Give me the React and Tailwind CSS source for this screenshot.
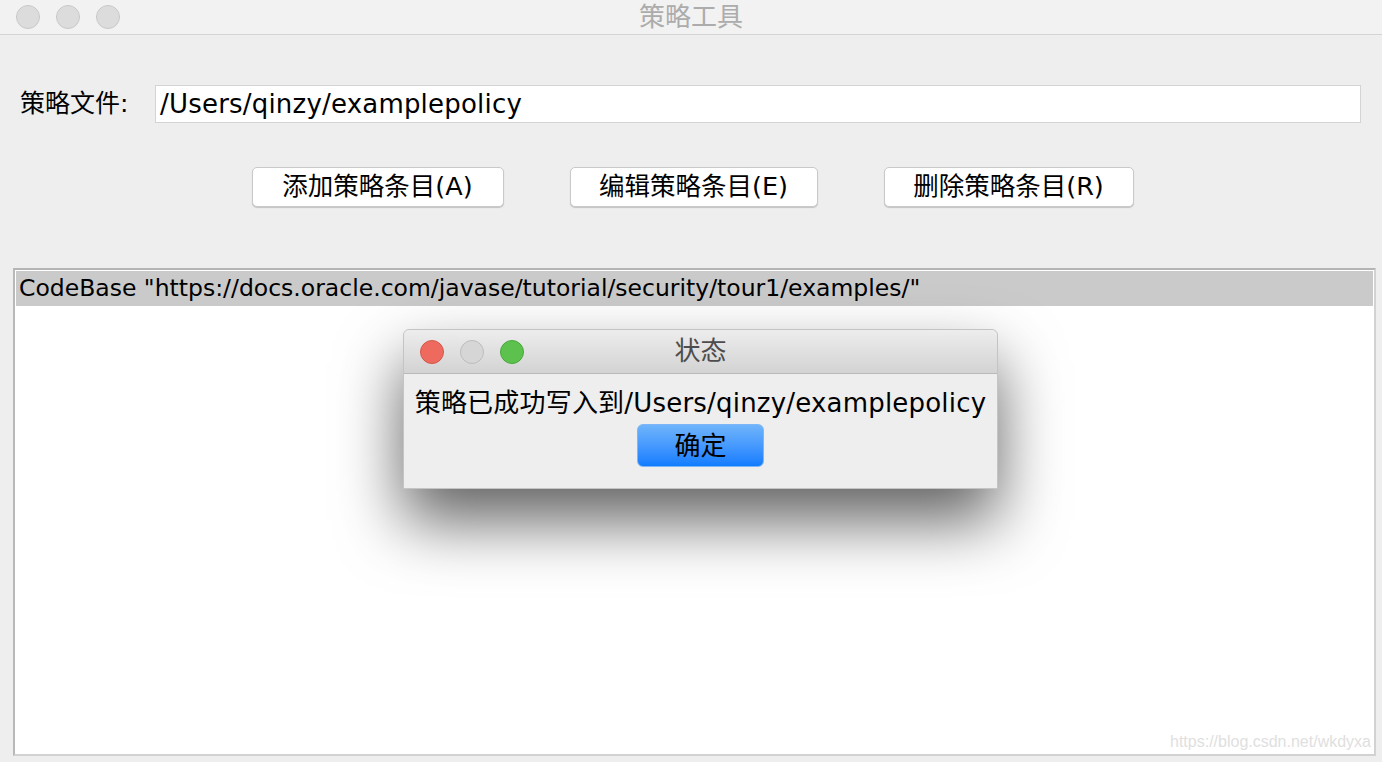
import React from 'react';

const font = { fontFamily: '"DejaVu Sans", "Noto Sans CJK SC", sans-serif' };

function Light({ color }) {
  const styles = {
    idle: 'bg-[#dcdcdc] border-[#c9c9c9]',
    grey: 'bg-[#d6d6d6] border-[#bdbdbd]',
    red: 'bg-[#ee6a5e] border-[#d5574b]',
    green: 'bg-[#5cc24d] border-[#47a83a]',
  };
  return <span className={`block w-6 h-6 rounded-full border ${styles[color]}`} />;
}

function ActionButton({ children, width }) {
  return (
    <button
      className={`${width} h-10 bg-white rounded-[5px] border border-[#c9c9c9] shadow-[0_1px_1px_rgba(0,0,0,0.18)] text-[25.5px] leading-none text-black`}
    >
      {children}
    </button>
  );
}

export default function App() {
  return (
    <div className="w-[1382px] h-[762px] bg-[#eeeeee] flex flex-col overflow-hidden" style={font}>
      {/* title bar */}
      <div className="relative h-[35px] shrink-0 bg-[#f2f2f2] border-b border-[#d4d4d4] flex items-center">
        <div className="flex items-center gap-4 pl-4">
          <Light color="idle" />
          <Light color="idle" />
          <Light color="idle" />
        </div>
        <div className="absolute inset-0 flex items-center justify-center text-[26px] text-[#acacac] pointer-events-none">
          策略工具
        </div>
      </div>

      {/* policy file row */}
      <div className="flex items-center mt-[50px] pl-5 pr-[21px]">
        <span className="text-[25px] text-black w-[135px] shrink-0">策略文件:</span>
        <div className="flex-1 h-[38px] bg-white border border-[#d4d4d4] flex items-center pl-[4px] text-[26px] tracking-[0.2px] text-black">
          /Users/qinzy/examplepolicy
        </div>
      </div>

      {/* buttons */}
      <div className="flex justify-center gap-[66px] mt-[44px] pl-[3px]">
        <ActionButton width="w-[252px]">添加策略条目(A)</ActionButton>
        <ActionButton width="w-[248px]">编辑策略条目(E)</ActionButton>
        <ActionButton width="w-[250px]">删除策略条目(R)</ActionButton>
      </div>

      {/* policy list */}
      <div className="relative mt-[61px] ml-[13px] mr-[6px] h-[488px] bg-white border-2 border-t-[#b4b4b4] border-l-[#b8b8b8] border-r-[#d2d2d2] border-b-[#d2d2d2] p-px">
        <div className="h-[35px] bg-[#cacaca] flex items-center pl-[3px] text-[23.5px] text-black whitespace-nowrap">
          CodeBase "https://docs.oracle.com/javase/tutorial/security/tour1/examples/"
        </div>

        {/* status dialog */}
        <div className="absolute left-[388px] top-[59px] w-[595px] h-[160px] bg-[#eeeeee] rounded-t-[6px] border border-[#c4c4c4] shadow-[0_32px_64px_rgba(0,0,0,0.62)] flex flex-col">
          <div className="relative h-[44px] shrink-0 rounded-t-[6px] bg-gradient-to-b from-[#ededed] to-[#d3d3d3] border-b border-[#b9b9b9] flex items-center">
            <div className="flex items-center gap-4 pl-4">
              <Light color="red" />
              <Light color="grey" />
              <Light color="green" />
            </div>
            <div className="absolute inset-0 flex items-center justify-center text-[26px] text-[#4d4d4d]">
              状态
            </div>
          </div>
          <div className="flex flex-col items-center pt-[14px]">
            <div className="text-[26px] leading-[30px] tracking-[0.2px] text-black whitespace-nowrap">
              策略已成功写入到/Users/qinzy/examplepolicy
            </div>
            <button className="mt-[6px] w-[127px] h-[43px] rounded-[6px] border border-[#7db7f7] bg-gradient-to-b from-[#6fb4fb] to-[#0f7cff] text-[26px] leading-none text-black">
              确定
            </button>
          </div>
        </div>

        <div
          className="absolute right-[3px] bottom-[0px] text-[16px] text-[#e0e0e0]"
          style={{ fontFamily: '"Liberation Sans", Arial, sans-serif' }}
        >
          https://blog.csdn.net/wkdyxa
        </div>
      </div>
    </div>
  );
}
